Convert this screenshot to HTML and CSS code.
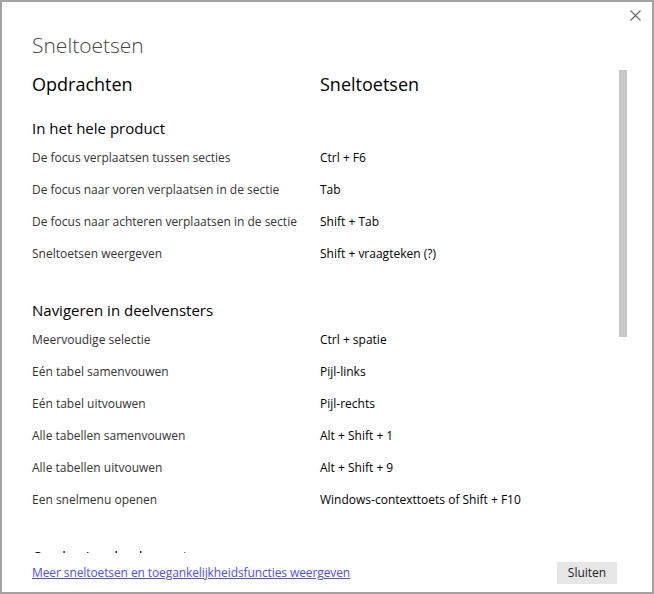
FILE: index.html
```html
<!DOCTYPE html>
<html lang="nl">
<head>
<meta charset="utf-8">
<title>Sneltoetsen</title>
<link rel="stylesheet" href="styles.css">
</head>
<body>
<div class="dialog">
  <button class="close" aria-label="Sluiten">
    <svg width="11" height="11" viewBox="0 0 11 11"><path d="M0.5 0.5 L10.5 10.5 M10.5 0.5 L0.5 10.5" stroke="#666" stroke-width="1.1" fill="none"/></svg>
  </button>
  <header class="head">
    <h1 class="title">Sneltoetsen</h1>
  </header>
  <main class="body">
    <div class="scrollthumb"></div>
    <div class="cols">
      <div>Opdrachten</div>
      <div>Sneltoetsen</div>
    </div>
    <section class="section">
      <h2 class="sec-title">In het hele product</h2>
      <div class="row"><span class="cmd">De focus verplaatsen tussen secties</span><span class="key">Ctrl + F6</span></div>
      <div class="row"><span class="cmd">De focus naar voren verplaatsen in de sectie</span><span class="key">Tab</span></div>
      <div class="row"><span class="cmd">De focus naar achteren verplaatsen in de sectie</span><span class="key">Shift + Tab</span></div>
      <div class="row"><span class="cmd">Sneltoetsen weergeven</span><span class="key">Shift + vraagteken (?)</span></div>
    </section>
    <section class="section">
      <h2 class="sec-title">Navigeren in deelvensters</h2>
      <div class="row"><span class="cmd">Meervoudige selectie</span><span class="key">Ctrl + spatie</span></div>
      <div class="row"><span class="cmd">Eén tabel samenvouwen</span><span class="key">Pijl-links</span></div>
      <div class="row"><span class="cmd">Eén tabel uitvouwen</span><span class="key">Pijl-rechts</span></div>
      <div class="row"><span class="cmd">Alle tabellen samenvouwen</span><span class="key">Alt + Shift + 1</span></div>
      <div class="row"><span class="cmd">Alle tabellen uitvouwen</span><span class="key">Alt + Shift + 9</span></div>
      <div class="row"><span class="cmd">Een snelmenu openen</span><span class="key">Windows-contexttoets of Shift + F10</span></div>
    </section>
    <section class="section">
      <h2 class="sec-title">Op de visuele elementen</h2>
    </section>
  </main>
  <footer class="foot">
    <a class="more" href="#">Meer sneltoetsen en toegankelijkheidsfuncties weergeven</a>
    <button class="btn">Sluiten</button>
  </footer>
</div>
</body>
</html>
```
FILE: styles.css
```css
html, body {
  margin: 0;
  padding: 0;
  background: #fff;
}
body {
  font-family: "Open Sans", "Noto Sans", sans-serif;
  color: #000;
}
.dialog {
  position: relative;
  width: 654px;
  height: 594px;
  box-sizing: border-box;
  border: 2px solid #a3a3a3;
  background: #fff;
  display: flex;
  flex-direction: column;
}
.close {
  position: absolute;
  top: 8px;
  right: 11px;
  border: 0;
  background: transparent;
  padding: 0;
  width: 11px;
  height: 11px;
  line-height: 0;
}
.head {
  padding: 28px 0 0 30px;
}
.title {
  margin: 0;
  font-size: 21px;
  font-weight: 300;
  line-height: 30px;
  color: #444;
}
.body {
  position: relative;
  flex: 1;
  overflow: hidden;
  padding: 9px 0 0 30px;
}
.scrollthumb {
  position: absolute;
  left: 617px;
  top: 10px;
  width: 8px;
  height: 267px;
  background: #c8c8c8;
}
.cols {
  display: grid;
  grid-template-columns: 288px 1fr;
  font-size: 18px;
  line-height: 30px;
  margin-bottom: 16px;
}
.section + .section {
  margin-top: 27px;
}
.sec-title {
  margin: 0;
  font-size: 15px;
  font-weight: 400;
  line-height: 27px;
}
.row {
  display: grid;
  grid-template-columns: 288px 1fr;
  font-size: 12px;
  line-height: 32px;
}
.cmd {
  color: #333;
}
.key {
  color: #000;
}
.foot {
  height: 39px;
  display: flex;
  align-items: center;
  justify-content: space-between;
  padding: 0 35px 0 30px;
}
.more {
  font-size: 12px;
  letter-spacing: -0.1px;
  color: #4d4dff;
  text-decoration: underline;
}
.btn {
  width: 60px;
  height: 22px;
  border: 0;
  background: #e6e6e6;
  font-family: inherit;
  font-size: 12px;
  color: #222;
  padding: 0;
}
```
